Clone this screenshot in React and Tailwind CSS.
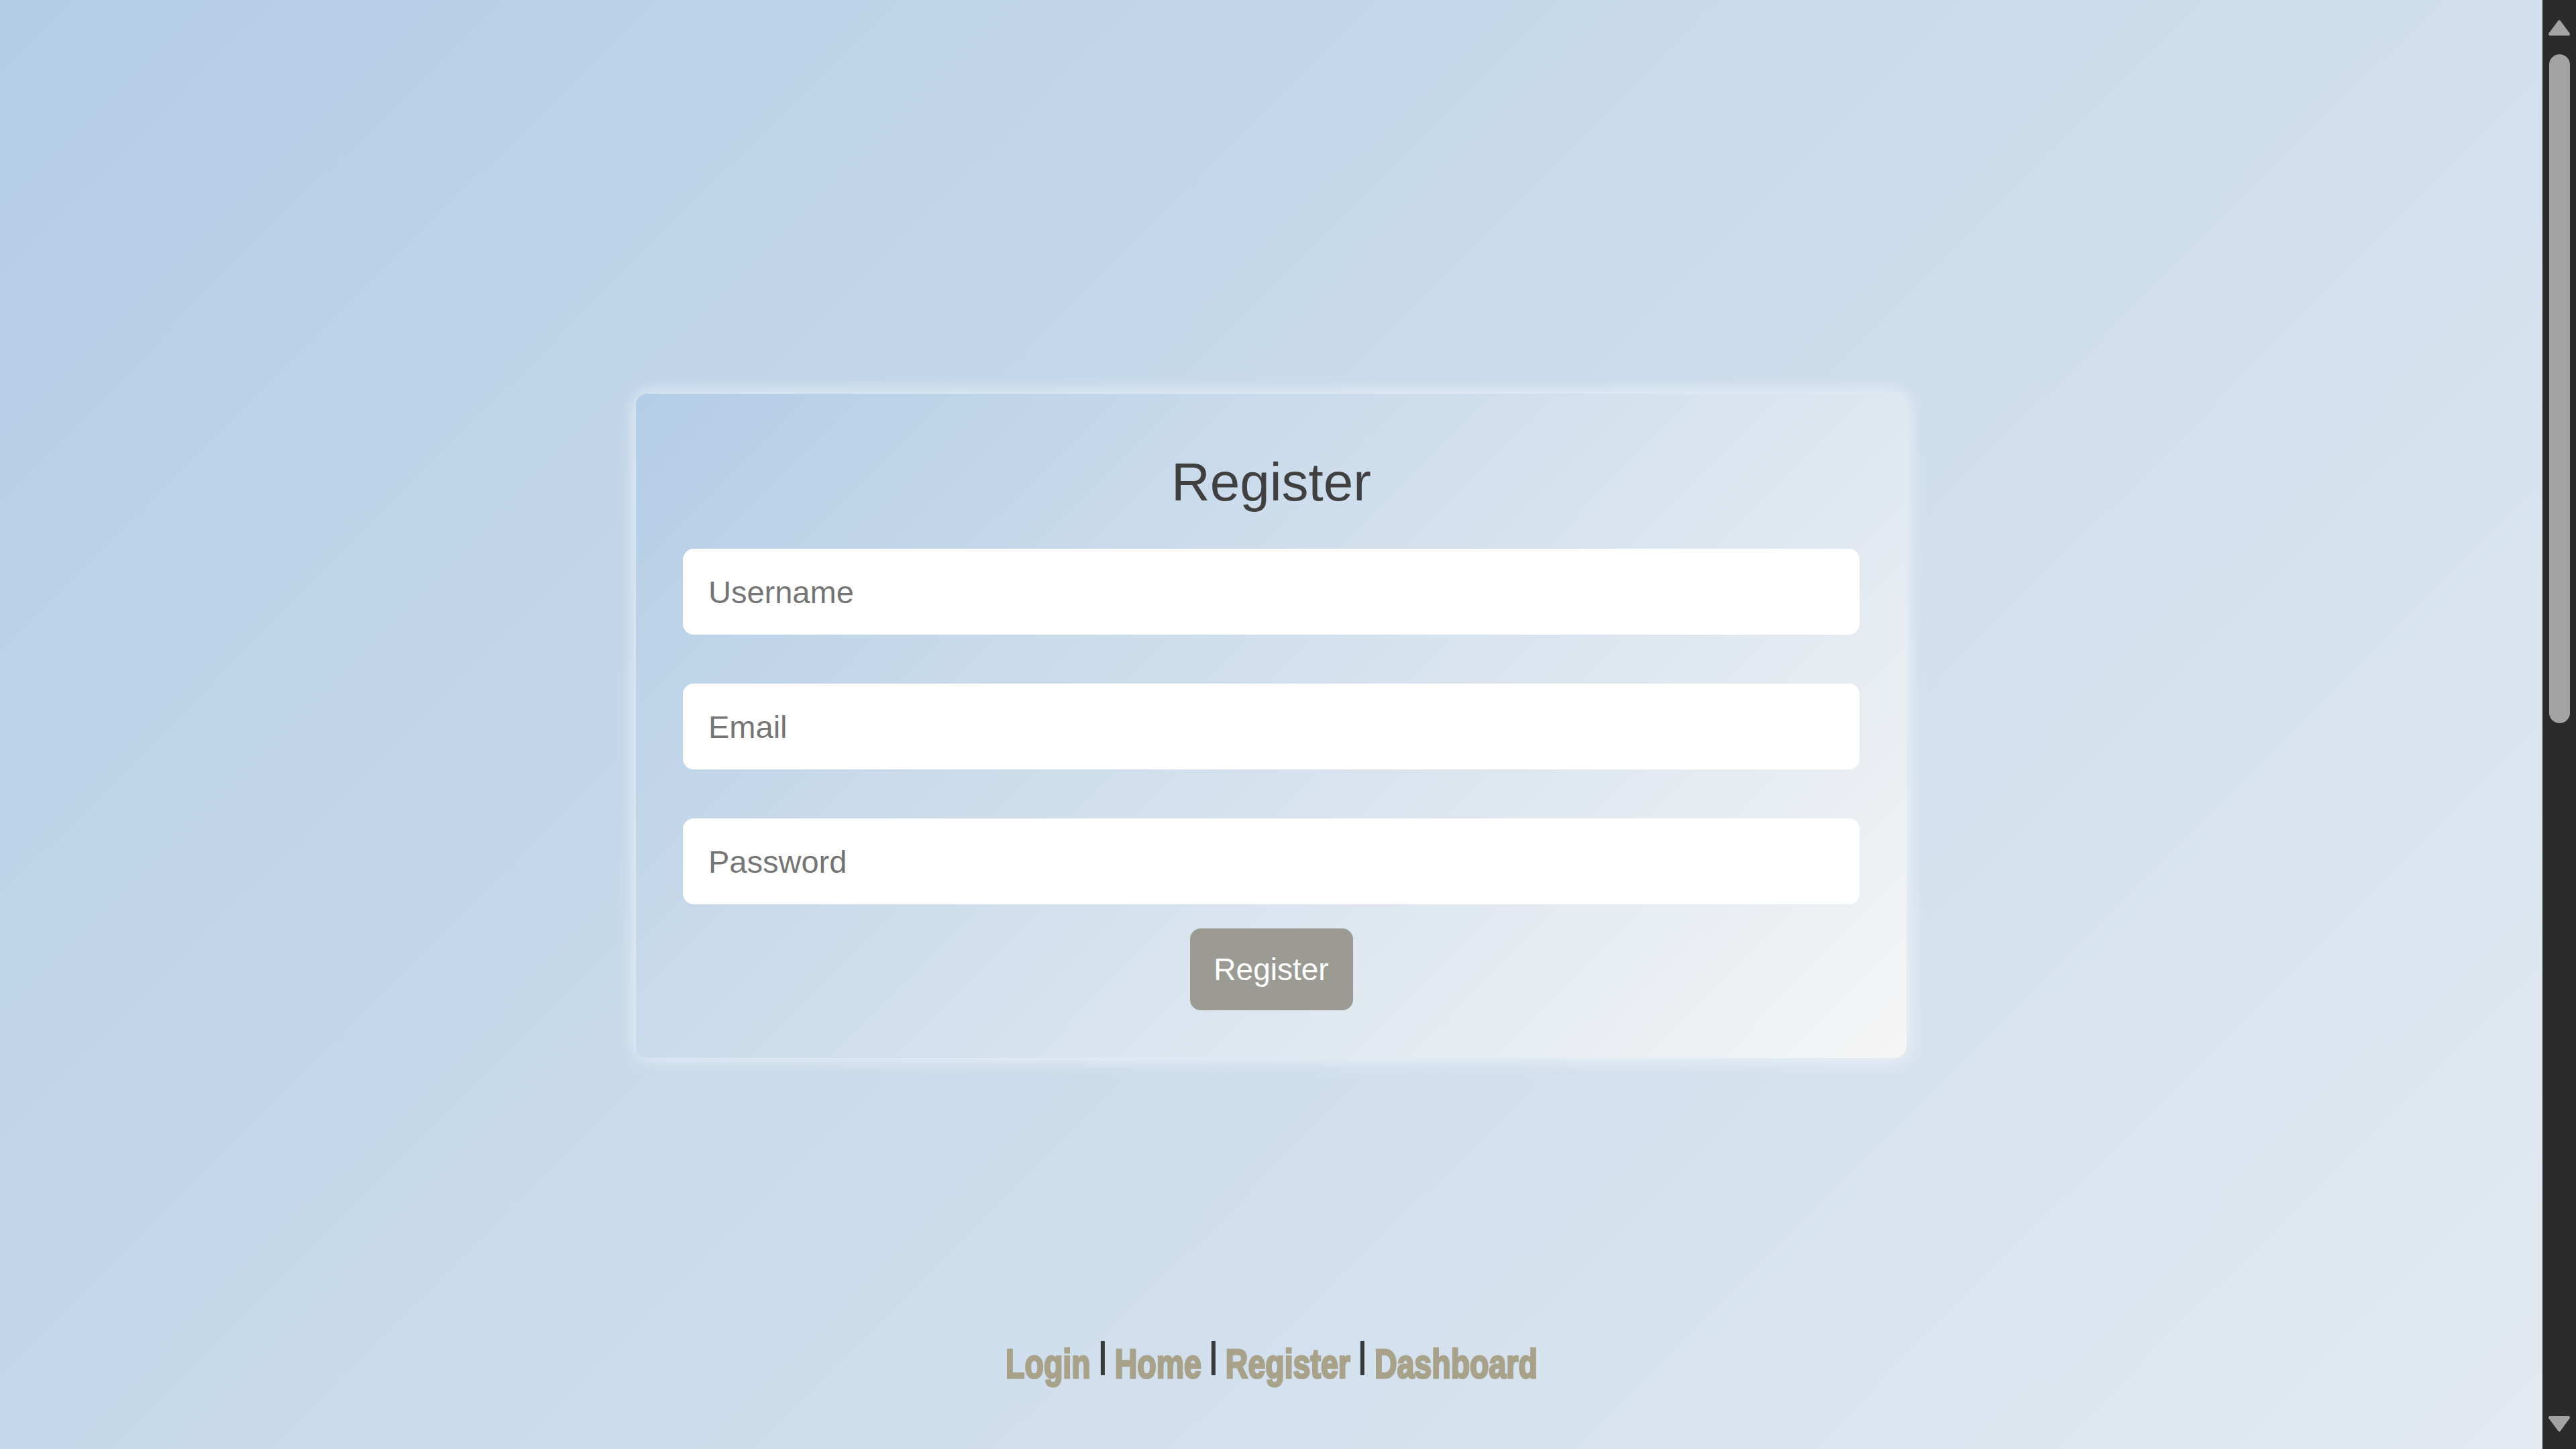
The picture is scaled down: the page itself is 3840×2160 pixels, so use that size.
import React from "react";

function Arrow({ down }) {
  return (
    <svg width="34" height="25" viewBox="0 0 34 25" className={down ? "rotate-180" : ""}>
      <path d="M17 3 L31 22 L3 22 Z" fill="#a3a3a3" stroke="#a3a3a3" strokeWidth="4" strokeLinejoin="round" />
    </svg>
  );
}

function Sep() {
  return <span className="inline-block w-[8px] h-[51px] bg-[#3a3a3a] align-[4px] mx-[20px]" />;
}

export default function App() {
  return (
    <div className="flex w-screen h-screen overflow-hidden font-['Liberation_Sans',Arial,sans-serif]">
      <main className="flex-1 h-full flex flex-col items-center bg-[linear-gradient(135deg,#b3cde6,#e3eaf1)]">
        <div className="mt-[587px] w-[1894px] rounded-[17px] px-[70px] pt-[86px] pb-[71px] bg-[linear-gradient(135deg,#b3cde6,#f5f5f5)] shadow-[0_0_28px_rgba(255,255,255,0.75)] flex flex-col items-center">
          <h2 className="text-[80px] leading-[92px] text-[#404040] font-normal">Register</h2>
          <input
            type="text"
            placeholder="Username"
            className="mt-[53px] w-full h-[128px] rounded-[16px] bg-white pl-[38px] text-[47px] text-[#333] placeholder:text-[#757575] outline-none"
          />
          <input
            type="email"
            placeholder="Email"
            className="mt-[73px] w-full h-[128px] rounded-[16px] bg-white pl-[38px] text-[47px] text-[#333] placeholder:text-[#757575] outline-none"
          />
          <input
            type="password"
            placeholder="Password"
            className="mt-[73px] w-full h-[128px] rounded-[16px] bg-white pl-[38px] text-[47px] text-[#333] placeholder:text-[#757575] outline-none"
          />
          <button className="mt-[36px] w-[243px] h-[122px] rounded-[16px] bg-[#9b9b93] text-white text-[46px]">
            Register
          </button>
        </div>
        <div className="mt-[420px] scale-x-[0.75] origin-center whitespace-nowrap text-[62px] leading-[72px] font-bold text-[#a9a28a] [-webkit-text-stroke:3px_#a9a28a]">
          <a href="#">Login</a>
          <Sep />
          <a href="#">Home</a>
          <Sep />
          <a href="#">Register</a>
          <Sep />
          <a href="#">Dashboard</a>
        </div>
      </main>
      <aside className="w-[50px] h-full bg-[#2b2b2b] flex flex-col items-center pt-[29px] pb-[25px]">
        <Arrow />
        <div className="mt-[27px] w-[31px] h-[997px] rounded-full bg-[#a3a3a3]" />
        <div className="flex-1" />
        <Arrow down />
      </aside>
    </div>
  );
}
